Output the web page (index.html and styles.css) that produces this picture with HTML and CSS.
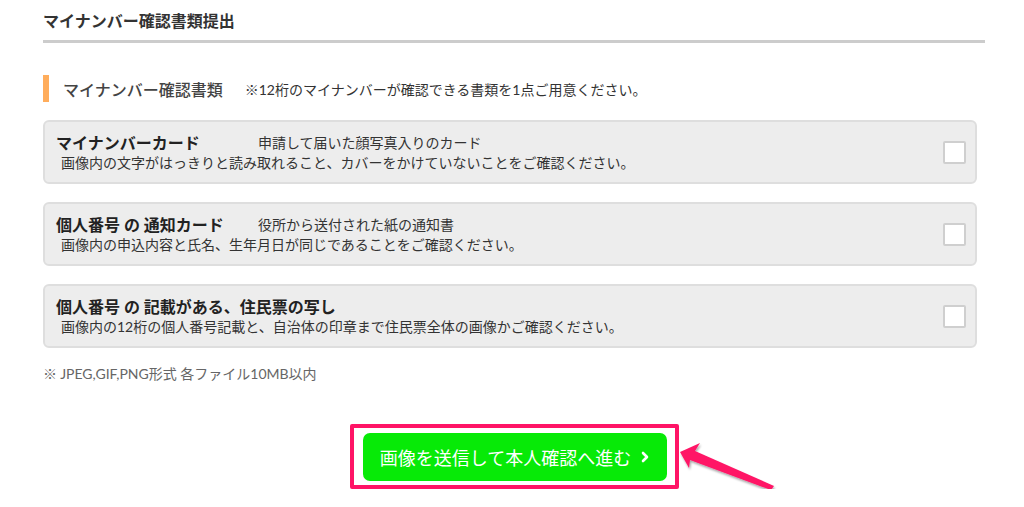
FILE: index.html
```html
<!DOCTYPE html>
<html lang="ja">
<head>
  <meta charset="UTF-8" />
  <meta name="viewport" content="width=device-width, initial-scale=1.0"/>
  <title>マイナンバー確認書類提出</title>
  <link rel="stylesheet" href="styles.css">
</head>
<body>
  <div class="page">
    <h1 class="page-title">マイナンバー確認書類提出</h1>

    <div class="section-head">
      <span class="bar"></span>
      <h2>マイナンバー確認書類</h2>
      <span class="note">※12桁のマイナンバーが確認できる書類を1点ご用意ください。</span>
    </div>

    <div class="cards">
      <label class="card">
        <div class="card-text">
          <div class="card-top">
            <strong class="card-title">マイナンバーカード</strong>
            <span class="card-sub">申請して届いた顔写真入りのカード</span>
          </div>
          <p class="card-desc">画像内の文字がはっきりと読み取れること、カバーをかけていないことをご確認ください。</p>
        </div>
        <span class="check"></span>
      </label>

      <label class="card">
        <div class="card-text">
          <div class="card-top">
            <strong class="card-title">個人番号 の 通知カード</strong>
            <span class="card-sub">役所から送付された紙の通知書</span>
          </div>
          <p class="card-desc">画像内の申込内容と氏名、生年月日が同じであることをご確認ください。</p>
        </div>
        <span class="check"></span>
      </label>

      <label class="card">
        <div class="card-text">
          <div class="card-top">
            <strong class="card-title">個人番号 の 記載がある、住民票の写し</strong>
          </div>
          <p class="card-desc">画像内の12桁の個人番号記載と、自治体の印章まで住民票全体の画像かご確認ください。</p>
        </div>
        <span class="check"></span>
      </label>
    </div>

    <p class="footnote">※ JPEG,GIF,PNG形式 各ファイル10MB以内</p>

    <div class="submit">
      <div class="highlight">
        <button class="btn-next">画像を送信して本人確認へ進む<svg class="chev" width="8" height="12" viewBox="0 0 8 12"><path d="M2 2 L6 6 L2 10" fill="none" stroke="#fff" stroke-width="2.6" stroke-linecap="round" stroke-linejoin="round"/></svg></button>
      </div>
    </div>
  </div>

  <svg class="arrow" width="120" height="64" viewBox="670 436 120 64">
    <defs>
      <filter id="sh" x="-20%" y="-20%" width="140%" height="140%">
        <feDropShadow dx="1" dy="2" stdDeviation="1.2" flood-color="#000" flood-opacity="0.35"/>
      </filter>
    </defs>
    <polygon filter="url(#sh)" fill="#ff1466"
      points="680,452 700,443 695,451 774,486 771,490 690,460 689,468"/>
  </svg>
</body>
</html>
```

FILE: styles.css
```css
body {
  margin: 0;
  font-family: 'Lato', 'Noto Sans CJK JP', sans-serif;
  color: #333;
  background: #fff;
  position: relative;
}

.page {
  width: 942px;
  margin-left: 43px;
}

.page-title {
  margin: 0;
  font-size: 16px;
  font-weight: bold;
  line-height: 20px;
  color: #333;
  padding: 11px 0 9px;
  border-bottom: 3px solid #cccccc;
}

.section-head {
  display: flex;
  align-items: center;
  margin-top: 32px;
  height: 27px;
}

.bar {
  width: 6px;
  height: 27px;
  background: #ffad5c;
}

.section-head h2 {
  margin: 0 0 0 14px;
  font-size: 16px;
  font-weight: 500;
  color: #444;
}

.note {
  margin-left: 22px;
  font-size: 14px;
  color: #333;
}

.cards {
  display: flex;
  flex-direction: column;
  gap: 18px;
  margin-top: 18px;
  width: 934px;
}

.card {
  display: flex;
  align-items: center;
  justify-content: space-between;
  background: #ededed;
  border: 2px solid #dedede;
  border-radius: 6px;
  padding: 8px 9px 8px 11px;
  box-sizing: border-box;
  height: 64px;
}

.card-top {
  display: flex;
  line-height: 21px;
  white-space: nowrap;
}

.card-title {
  min-width: 202px;
  font-size: 16px;
  font-weight: bold;
  color: #222;
}

.card-sub {
  font-size: 14px;
  color: #333;
}

.card-desc {
  margin: 0 0 0 5px;
  font-size: 14px;
  line-height: 20px;
  color: #333;
}

.check {
  width: 23px;
  height: 23px;
  flex-shrink: 0;
  box-sizing: border-box;
  background: #fff;
  border: 2px solid #cfcfcf;
  border-radius: 2px;
}

.footnote {
  margin: 16px 0 0;
  font-size: 14px;
  line-height: 20px;
  color: #666;
}

.submit {
  display: flex;
  justify-content: center;
  margin-top: 40px;
}

.highlight {
  border: 4px solid #ff1466;
  border-radius: 2px;
  padding: 5px 8px 4px 9px;
}

.btn-next {
  width: 304px;
  height: 48px;
  background: #07ea07;
  color: #fff;
  border: none;
  border-radius: 7px;
  font-family: 'Lato', 'Noto Sans CJK JP', sans-serif;
  font-size: 18px;
  cursor: pointer;
  display: flex;
  align-items: center;
  justify-content: center;
}

.chev {
  margin-left: 10px;
}

.arrow {
  position: absolute;
  left: 670px;
  top: 436px;
}
```
